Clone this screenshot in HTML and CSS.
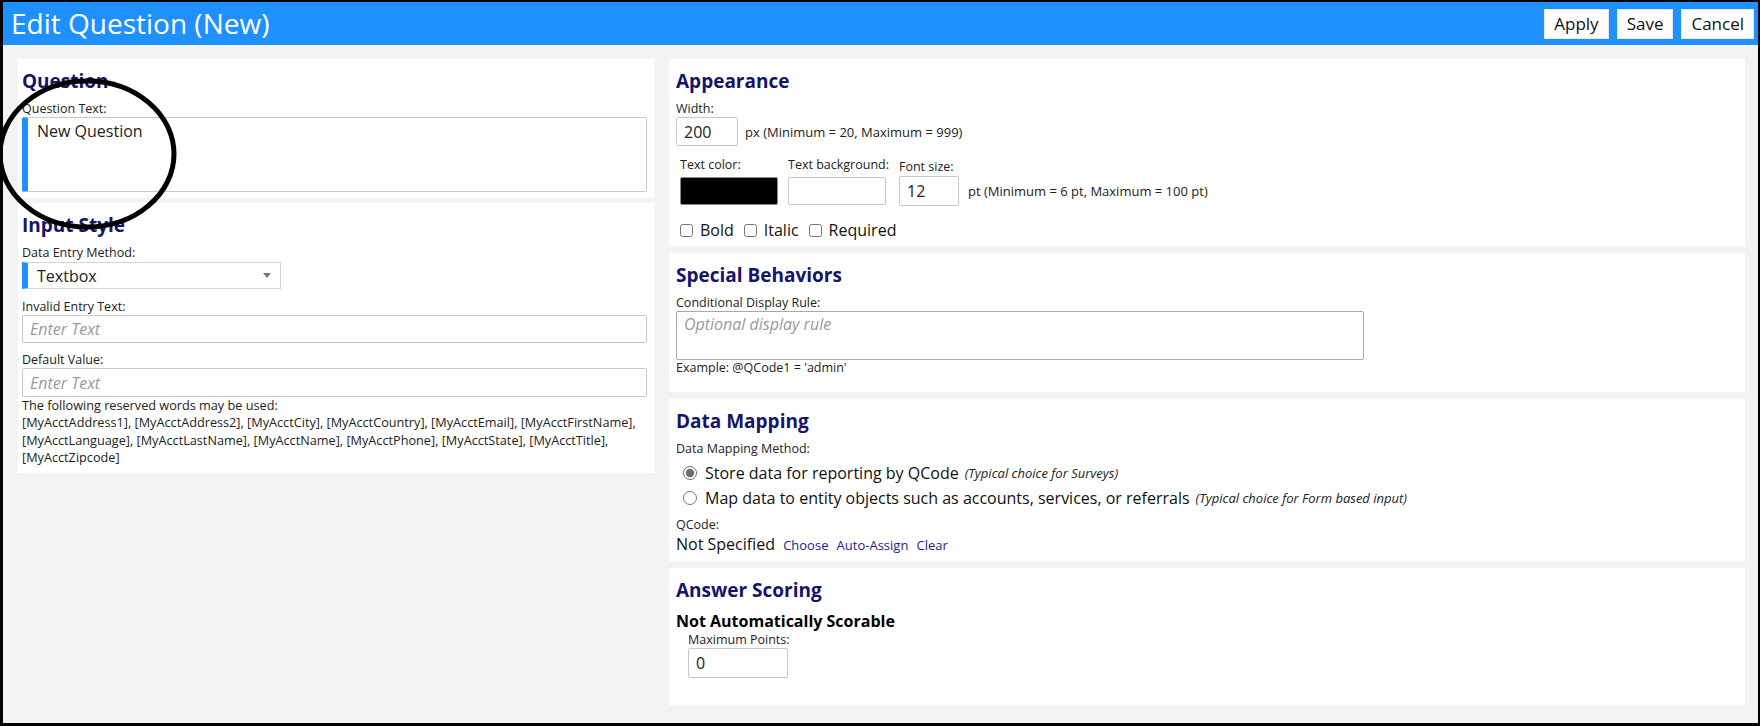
FILE: index.html
```html
<!DOCTYPE html>
<html lang="en">
<head>
  <meta charset="UTF-8">
  <meta name="viewport" content="width=device-width, initial-scale=1.0">
  <title>Edit Question (New)</title>
  <link rel="stylesheet" href="styles.css">
</head>
<body>
<div class="frame">
  <div class="topbar">
    <h1>Edit Question (New)</h1>
    <div class="actions">
      <button>Apply</button>
      <button>Save</button>
      <button>Cancel</button>
    </div>
  </div>

  <div class="content">
    <!-- left column -->
    <div class="col left">
      <div class="panel">
        <h2>Question</h2>
        <label class="lbl">Question Text:</label>
        <textarea class="box marked qtext">New Question</textarea>
      </div>

      <div class="panel">
        <h2>Input Style</h2>
        <label class="lbl">Data Entry Method:</label>
        <div class="select marked">
          <span>Textbox</span>
          <i class="caret"></i>
        </div>
        <label class="lbl">Invalid Entry Text:</label>
        <input class="box text" placeholder="Enter Text">
        <label class="lbl">Default Value:</label>
        <input class="box text last" placeholder="Enter Text">
        <p class="reserved">
          The following reserved words may be used:<br>
          [MyAcctAddress1], [MyAcctAddress2], [MyAcctCity], [MyAcctCountry], [MyAcctEmail], [MyAcctFirstName],<br>
          [MyAcctLanguage], [MyAcctLastName], [MyAcctName], [MyAcctPhone], [MyAcctState], [MyAcctTitle],<br>
          [MyAcctZipcode]
        </p>
      </div>
    </div>

    <!-- right column -->
    <div class="col right">
      <div class="panel">
        <h2>Appearance</h2>
        <label class="lbl">Width:</label>
        <div class="inline">
          <input class="box num" value="200">
          <span class="hint">px (Minimum = 20, Maximum = 999)</span>
        </div>

        <div class="colors">
          <div class="fld">
            <label class="lbl">Text color:</label>
            <div class="swatch black"></div>
          </div>
          <div class="fld">
            <label class="lbl">Text background:</label>
            <div class="swatch"></div>
          </div>
          <div class="fld fsize">
            <label class="lbl">Font size:</label>
            <div class="inline">
              <input class="box num small" value="12">
              <span class="hint">pt (Minimum = 6 pt, Maximum = 100 pt)</span>
            </div>
          </div>
        </div>

        <div class="checks">
          <label><input type="checkbox">Bold</label>
          <label><input type="checkbox">Italic</label>
          <label><input type="checkbox">Required</label>
        </div>
      </div>

      <div class="panel special">
        <h2>Special Behaviors</h2>
        <label class="lbl">Conditional Display Rule:</label>
        <textarea class="box rule" placeholder="Optional display rule"></textarea>
        <div class="lbl">Example: @QCode1 = 'admin'</div>
      </div>

      <div class="panel">
        <h2>Data Mapping</h2>
        <label class="lbl">Data Mapping Method:</label>
        <div class="radios">
          <label><input type="radio" name="map" checked>Store data for reporting by QCode <em>(Typical choice for Surveys)</em></label>
          <label><input type="radio" name="map">Map data to entity objects such as accounts, services, or referrals <em>(Typical choice for Form based input)</em></label>
        </div>
        <label class="lbl qcode">QCode:</label>
        <div class="qvalue">
          Not Specified
          <a href="#">Choose</a>
          <a href="#">Auto-Assign</a>
          <a href="#">Clear</a>
        </div>
      </div>

      <div class="panel scoring">
        <h2>Answer Scoring</h2>
        <div class="notice">Not Automatically Scorable</div>
        <div class="points">
          <label class="lbl">Maximum Points:</label>
          <input class="box num pts" value="0">
        </div>
      </div>
    </div>
  </div>

  <svg class="mark" width="200" height="240" viewBox="0 0 200 240">
    <ellipse cx="84" cy="152" rx="87" ry="73" fill="none" stroke="#000" stroke-width="5"/>
  </svg>
</div>
</body>
</html>
```

FILE: styles.css
```css
* {
  box-sizing: border-box;
}
html, body {
  margin: 0;
  background: #000;
  font-family: 'Open Sans', 'Noto Sans', sans-serif;
  color: #111;
}

.frame {
  position: relative;
  height: 726px;
  border: 2px solid #000;
  border-left-width: 3px;
  border-bottom-width: 3px;
  background: #f3f3f3;
  display: flex;
  flex-direction: column;
}

/* ============ top bar ============ */
.topbar {
  height: 43px;
  flex: none;
  background: #1e90ff;
  display: flex;
  align-items: center;
  justify-content: space-between;
  padding: 0 4px 0 8px;
}
.topbar h1 {
  margin: 0;
  font-size: 28px;
  font-weight: 400;
  line-height: 43px;
  color: #fff;
}
.actions {
  display: flex;
  gap: 8px;
}
.actions button {
  height: 30px;
  padding: 0 9px;
  background: #fff;
  border: 1px solid #e8e8e8;
  font-family: 'Open Sans', sans-serif;
  font-size: 17px;
  color: #111;
}

/* ============ columns ============ */
.content {
  flex: 1;
  display: flex;
  align-items: flex-start;
  gap: 15px;
  padding: 14px 13px 0 15px;
}
.col {
  display: flex;
  flex-direction: column;
}
.left {
  width: 636px;
  gap: 5px;
}
.right {
  flex: 1;
  gap: 7px;
}
.panel {
  background: #fff;
  padding: 10px 7px 6px 4px;
}
.right .panel {
  padding-left: 7px;
  padding-bottom: 5px;
}

h2 {
  margin: 0 0 8px;
  font-size: 19px;
  line-height: 24px;
  font-weight: 700;
  color: #14146c;
}
.lbl {
  display: block;
  font-size: 12.5px;
  line-height: 16px;
  color: #222;
}

/* ============ inputs ============ */
.box {
  display: block;
  border: 1px solid #c8c8c8;
  border-radius: 2px;
  background: #fff;
  font-family: 'Open Sans', sans-serif;
  font-size: 16px;
  color: #222;
  outline: none;
}
.box::placeholder {
  color: #9a9a9a;
  font-style: italic;
}
.marked {
  border-left: 6px solid #1e90ff;
}
.qtext {
  width: 100%;
  height: 75px;
  padding: 2px 9px;
  line-height: 22px;
  resize: none;
}
.select {
  display: flex;
  align-items: center;
  justify-content: space-between;
  width: 259px;
  height: 27px;
  margin: 1px 0 10px;
  padding: 0 9px;
  border: 1px solid #d4d4d4;
  border-left: 6px solid #1e90ff;
  font-size: 16px;
  color: #222;
}
.caret {
  width: 0;
  height: 0;
  border-left: 4px solid transparent;
  border-right: 4px solid transparent;
  border-top: 5px solid #777;
}
.text {
  width: 100%;
  height: 28px;
  padding: 0 7px;
  margin-bottom: 9px;
}
.text.last {
  height: 29px;
  margin-bottom: 0;
}
.reserved {
  margin: 0 0 1px;
  font-size: 12.7px;
  line-height: 17.3px;
  white-space: nowrap;
  color: #222;
}

.inline {
  display: flex;
  align-items: center;
  gap: 7px;
}
.num {
  width: 62px;
  height: 29px;
  padding: 0 7px;
}
.hint {
  font-size: 13px;
  color: #222;
}

.colors {
  display: flex;
  align-items: flex-start;
  gap: 10px;
  margin-top: 11px;
  padding-left: 4px;
}
.colors .lbl {
  margin-bottom: 4px;
}
.swatch {
  width: 98px;
  height: 28px;
  border: 1px solid #c8c8c8;
  border-radius: 2px;
  background: #fff;
}
.swatch.black {
  background: #000;
  border-color: #888;
}
.fsize {
  padding-top: 2px;
}
.fsize .lbl {
  margin-bottom: 1px;
}
.num.small {
  width: 60px;
  height: 30px;
}
.fsize .inline {
  gap: 9px;
}

.checks {
  display: flex;
  gap: 10px;
  margin-top: 13px;
  padding-left: 4px;
  font-size: 16px;
  line-height: 22px;
}
.checks label {
  display: flex;
  align-items: center;
}
.checks input {
  width: 13px;
  height: 13px;
  margin: 0 7px 0 0;
}

.rule {
  width: 688px;
  height: 49px;
  padding: 1px 7px;
  line-height: 22px;
  border-color: #a8a8a8;
  resize: none;
}
.right .panel.special {
  padding-bottom: 16px;
}

.radios {
  margin-top: 3px;
  padding-left: 7px;
  font-size: 16px;
}
.radios label {
  display: flex;
  align-items: center;
  height: 25px;
}
.radios input {
  width: 14px;
  height: 14px;
  margin: 0 8px 0 0;
  accent-color: #6e6e6e;
}
.radios em {
  font-size: 13px;
  margin-left: 6px;
  color: #222;
}
.qcode {
  margin-top: 7px;
}
.qvalue {
  font-size: 16px;
  line-height: 22px;
}
.qvalue a {
  margin-left: 4px;
  font-size: 13px;
  color: #1c1c8e;
  text-decoration: none;
}

.right .panel.scoring {
  padding-bottom: 27px;
}
.notice {
  margin-top: 7px;
  font-size: 16px;
  line-height: 22px;
  font-weight: 700;
  color: #000;
}
.points {
  padding-left: 12px;
}
.pts {
  width: 100px;
  height: 30px;
}

/* hand drawn mark over the question box */
.mark {
  position: absolute;
  left: 0;
  top: 0;
  pointer-events: none;
}
```
